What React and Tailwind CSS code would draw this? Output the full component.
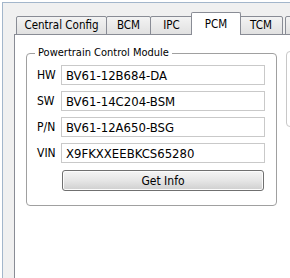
import React from "react";

const font = { fontFamily: '"DejaVu Sans Condensed", "DejaVu Sans", sans-serif' };

function Tab({ label, w, ml, selected }) {
  if (selected) {
    return (
      <div
        className="relative z-10 h-[23px] shrink-0 border border-b-0 border-[#898c95] bg-white rounded-t-[2px] flex items-start justify-center pt-[3px] text-[11.5px] text-black"
        style={{ width: w, marginLeft: ml }}
      >
        {label}
      </div>
    );
  }
  return (
    <div
      className="h-[19px] shrink-0 border border-[#898c95] rounded-t-[2px] bg-gradient-to-b from-[#f3f3f3] to-[#e1e1e1] flex items-center justify-center text-[11.5px] text-black"
      style={{ width: w, marginLeft: ml }}
    >
      {label}
    </div>
  );
}

function Field({ label, value }) {
  return (
    <div className="flex items-center h-[20px]">
      <div className="w-[24px] text-[12px] text-black leading-none">{label}</div>
      <div className="w-[204px] h-[20px] border border-[#c9c9c9] bg-white flex items-center pl-[4px] text-[13px] text-black leading-none">
        {value}
      </div>
    </div>
  );
}

export default function App() {
  const tabs = [
    { label: "Central Config", w: 91, ml: 0 },
    { label: "BCM", w: 45, ml: -1 },
    { label: "IPC", w: 43, ml: -1 },
    { label: "PCM", w: 50, ml: -2, selected: true },
    { label: "TCM", w: 44, ml: -2 },
    { label: "", w: 40, ml: 2 },
  ];
  return (
    <div className="w-[290px] h-[278px] overflow-hidden bg-white pl-[2px] pt-[2px]" style={font}>
      <div className="w-[400px] h-[400px] border-l border-t border-[#a3b6cb] bg-[#f0f0f0] pl-[11px] pt-[9px]">
        <div className="relative z-10 flex items-end h-[23px] -mb-[1px] pl-[2px]">
          {tabs.map((t, i) => (
            <Tab key={i} {...t} />
          ))}
        </div>
        <div className="w-[320px] h-[320px] border border-[#898c95] bg-white pl-[11px] pt-[18px]">
          <div className="flex items-start">
            <div className="relative w-[251px] h-[153px] shrink-0 border border-[#a0a0a0] rounded-[4px] pl-[10px] pt-[11px]">
              <div className="absolute left-[8px] top-[-8px] bg-white px-[3px] text-[11px] text-black leading-[14px]">
                Powertrain Control Module
              </div>
              <div className="flex flex-col gap-[6px]">
                <Field label="HW" value="BV61-12B684-DA" />
                <Field label="SW" value="BV61-14C204-BSM" />
                <Field label="P/N" value="BV61-12A650-BSG" />
                <Field label="VIN" value="X9FKXXEEBKCS65280" />
              </div>
              <div className="pl-[25px] mt-[7px]">
                <button className="w-[202px] h-[21px] border border-[#707070] rounded-[3px] bg-gradient-to-b from-[#f5f5f5] via-[#e6e6e6] to-[#cfcfcf] text-[12px] text-black leading-none flex items-center justify-center shadow-[inset_0_0_0_1px_#fcfcfc]">
                  Get Info
                </button>
              </div>
            </div>
            <div className="ml-[9px] mt-[-2px] w-[60px] h-[76px] border border-[#c8c8c8] rounded-[4px] shrink-0"></div>
          </div>
        </div>
      </div>
    </div>
  );
}
